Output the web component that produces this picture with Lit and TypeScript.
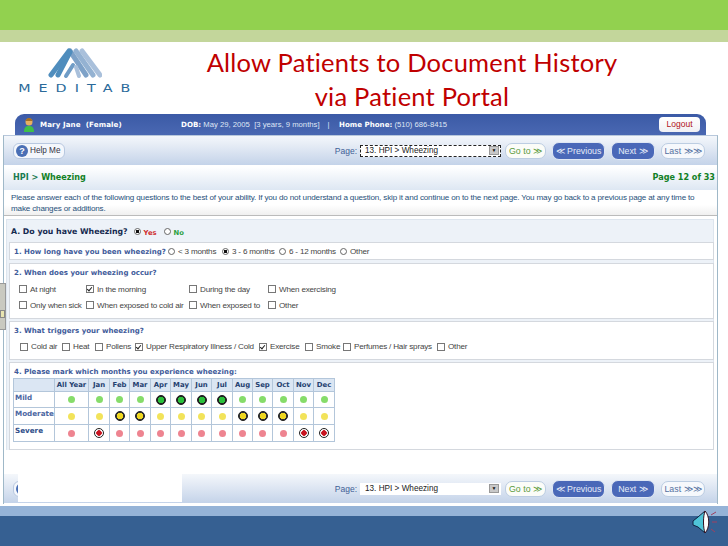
import { LitElement, html, css } from "lit";
import { customElement } from "lit/decorators.js";

const months = ["Jan","Feb","Mar","Apr","May","Jun","Jul","Aug","Sep","Oct","Nov","Dec"];
const colWidths = [41,34,21,20,21,20,21,20,21,20,20,21,20,21];
const chosen: Record<string, number[]> = {
  Mild: [3,4,5,6],
  Moderate: [1,2,7,8,9],
  Severe: [0,10,11],
};
const tone: Record<string,string> = { Mild: "g", Moderate: "y", Severe: "r" };
const q2 = [
  ["At night",false],["In the morning",true],["During the day",false],["When exercising",false],
  ["Only when sick",false],["When exposed to cold air",false],["When exposed to",false],["Other",false],
] as [string,boolean][];
const q3 = [
  ["Cold air",false,42],["Heat",false,33],["Pollens",false,40],["Upper Respiratory Illness / Cold",true,124],
  ["Exercise",true,46],["Smoke",false,38],["Perfumes / Hair sprays",false,94],["Other",false,40],
] as [string,boolean,number][];
const q1 = [["< 3 months",false,54],["3 - 6 months",true,57],["6 - 12 months",false,61],["Other",false,40]] as [string,boolean,number][];

@customElement("app-root")
export class AppRoot extends LitElement {
  static styles = css`
    :host { display: block; width: 728px; height: 546px; overflow: hidden; font-family: "Liberation Sans", Arial, sans-serif; background: #fff; }
    .page { position: relative; width: 728px; height: 546px; display: flex; flex-direction: column; background: #fff; overflow: hidden; }
    .green { height: 30px; background: #92d14f; flex: none; }
    .lime { height: 12px; background: #c3d69b; flex: none; }
    .head { height: 72px; flex: none; display: flex; }
    .logo { width: 114px; margin-left: 18px; display: flex; flex-direction: column; align-items: center; padding-top: 6px; box-sizing: border-box; height: 72px; }
    .logo svg { display: block; }
    .wordmark { font: 400 11px/11px "DejaVu Sans", sans-serif; color: #2a6a9a; letter-spacing: 6.2px; margin-top: 4px; white-space: nowrap; margin-right: -6.2px; transform: scaleX(1.3); }
    .title { margin-left: 50px; width: 460px; text-align: center; color: #c00000; font: 400 25.5px/34px Lato, sans-serif; letter-spacing: .22px; padding-top: 3px; box-sizing: border-box; white-space: nowrap; }
    .patient { flex: none; margin-left: 15px; width: 691px; height: 21px; box-sizing: border-box; background: linear-gradient(#3b5aa6, #4a68b2); border-radius: 9px 9px 0 0; display: flex; align-items: center; color: #dfe6f5; font-size: 7.7px; padding-left: 8px; white-space: nowrap; }
    .patient b { color: #fff; font-family: "DejaVu Sans", sans-serif; font-size: 7.1px; }
    .name { margin-left: 5px; width: 141px; letter-spacing: .1px; }
    .dob { width: 137px; }
    .sep { width: 21px; text-align: center; }
    .phone { flex: 1; }
    .logout { width: 41px; height: 15px; margin-right: 6px; background: linear-gradient(#fff, #f0f0f4); border-radius: 4px; color: #b01020; font-size: 8.5px; line-height: 15px; text-align: center; }
    .win { flex: none; margin-left: 3px; width: 715px; height: 369px; box-sizing: border-box; border: 1px solid #9fb8c8; border-bottom: 0; border-top-color: #b8c8dc; display: flex; flex-direction: column; }
    .bar { flex: none; height: 29px; display: flex; align-items: center; background: linear-gradient(#f4f7fb 0%, #dfe7f3 45%, #c4d3e9 100%); font-size: 8.5px; color: #444; padding-left: 9px; padding-right: 12px; }
    .help { width: 52px; height: 16px; box-sizing: border-box; border: 1px solid #b8c8e0; border-radius: 6px; background: #f4f7fc; display: flex; align-items: center; gap: 2px; padding-left: 2px; color: #334; font-size: 8.2px; white-space: nowrap; }
    .q { width: 12px; height: 12px; border-radius: 50%; background: #4a6fb5; color: #fff; font: 700 9px/12px "Liberation Sans", sans-serif; text-align: center; flex: none; }
    .pg { margin-left: auto; color: #3f5f96; font-size: 8.5px; margin-right: 3px; }
    .sel { width: 141px; height: 12px; box-sizing: border-box; border: 1px dashed #222; background: #fff; display: flex; align-items: center; justify-content: space-between; padding-left: 4px; font-size: 8.2px; color: #222; white-space: nowrap; margin-right: 4px; }
    .sel.plain { border-color: #fff; }
    .arrow { width: 10px; height: 9px; background: #c8c8c8; border: 1px solid #999; box-sizing: border-box; color: #111; font-size: 5px; line-height: 7px; text-align: center; margin-right: 1px; }
    .btn { height: 18px; box-sizing: border-box; border-radius: 7px; display: flex; align-items: center; justify-content: center; font-size: 8.8px; white-space: nowrap; margin-left: 6px; }
    .go { width: 41px; margin-left: 0; background: #fbfcf8; border: 1px solid #bccde2; color: #5a9a3c; height: 16px; }
    .prev { width: 53px; background: #4a68b8; border: 1px solid #dfe7f4; color: #e6ecf8; }
    .next { width: 44px; background: #4a68b8; border: 1px solid #dfe7f4; color: #e6ecf8; }
    .last { width: 44px; background: #f6f8fc; border: 1px solid #bccde2; color: #5470a0; height: 16px; }
    .crumb { flex: none; margin-top: 2px; height: 23px; box-sizing: border-box; padding: 0 2px 3px 9px; display: flex; align-items: center; justify-content: space-between; background: linear-gradient(#fff, #dde7f3); font: 700 8.1px "DejaVu Sans", sans-serif; color: #118025; }
    .crumb i { font-style: normal; color: #1a7a50; }
    .intro { flex: none; height: 26px; box-sizing: border-box; padding: 2px 0 0 7px; font-size: 8.1px; letter-spacing: -.17px; line-height: 11px; color: #27507a; background: linear-gradient(#fff 60%, #f0f0f0); border-bottom: 1px solid #bbb; white-space: nowrap; }
    .panel { flex: none; margin: 3px 3px 0 2px; background: #edf2f8; border: 1px solid #dde5ee; border-bottom: 0; height: 231px; box-sizing: border-box; padding: 0 0 0 2px; }
    .a { height: 22px; display: flex; align-items: center; padding-left: 2px; font: 700 7.8px "DejaVu Sans", sans-serif; color: #14294f; white-space: nowrap; }
    .a .rd.first { margin-left: 6px; }
    .a .yes { color: #d03030; font-size: 6.8px; margin: 3px 7px 0 3px; }
    .a .no { color: #2aa040; font-size: 6.8px; margin: 3px 0 0 3px; }
    .box { background: #fff; border: 1px solid #d4d8de; box-sizing: border-box; margin-bottom: 2px; padding-left: 4px; width: 705px; }
    .lbl { font: 700 7.05px "DejaVu Sans", sans-serif; color: #3f5b9a; white-space: nowrap; }
    .b1 { height: 18px; display: flex; align-items: center; margin-bottom: 3px; }
    .b2 { height: 56px; padding-top: 4px; }
    .b3 { height: 39px; padding-top: 4px; }
    .b4 { height: 88px; padding-top: 4px; margin-bottom: 0; }
    .g2 { display: grid; grid-template-columns: 67px 103px 79px 90px; grid-auto-rows: 16px; margin: 4px 0 0 5px; }
    .row { display: flex; margin: 7px 0 0 6px; }
    .opt { display: flex; align-items: center; gap: 3px; font-size: 8.1px; letter-spacing: -.2px; color: #444; white-space: nowrap; flex: none; }
    .ck { width: 8px; height: 8px; box-sizing: border-box; border: 1px solid #777; background: #fff; position: relative; flex: none; }
    .ck.on::after { content: ""; position: absolute; left: 1px; top: 0; width: 2px; height: 4px; border: solid #222; border-width: 0 1.5px 1.5px 0; transform: rotate(40deg); }
    .rd { width: 7px; height: 7px; box-sizing: border-box; border: 1px solid #666; border-radius: 50%; background: #fff; display: inline-block; flex: none; }
    .rd.on { background: radial-gradient(circle, #111 0 1.5px, #fff 2px); }
    table { border-collapse: collapse; table-layout: fixed; width: 321px; margin-top: 2px; margin-left: -1px; font: 700 6.9px "DejaVu Sans", sans-serif; color: #24406f; }
    th, td { border: 1px solid #b3c6da; padding: 0; text-align: center; }
    thead th { height: 12px; background: #dbe6f3; font-weight: 700; }
    tbody th { text-align: left; color: #4c67a2; font-weight: 700; font-size: 7.2px; padding-left: 1px; white-space: nowrap; vertical-align: top; line-height: 12px; }
    tbody tr:last-child th { color: #314f8a; }
    tr.r1 td, tr.r1 th { height: 15px; }
    tr.r2 td, tr.r2 th { height: 16px; }
    tr.r3 td, tr.r3 th { height: 16px; }
    .dot { display: inline-block; width: 7px; height: 7px; border-radius: 50%; vertical-align: middle; }
    .dot.g { background: #86dc6a; } .dot.y { background: #f2e35a; } .dot.r { background: #ee8490; }
    .big { display: inline-block; width: 10px; height: 10px; border-radius: 50%; border: 1px solid #222; box-sizing: border-box; vertical-align: middle; }
    .big.g { background: radial-gradient(circle, #2bc03c 0 3px, #222 3.5px); }
    .big.y { background: radial-gradient(circle, #f0d820 0 3px, #333 3.5px); }
    .big.r { background: radial-gradient(circle, #c81420 0 2.5px, #fff 3px); }
    .foot { margin-top: auto; margin-bottom: 1px; }
    .band { position: absolute; left: 0; right: 0; top: 506px; height: 10px; background: #95b3d7; }
    .navy { position: absolute; left: 0; right: 0; top: 516px; height: 30px; background: #366092; }
    .notch { position: absolute; left: 718px; top: 500px; width: 10px; height: 6px; background: #fff; }
    .patch { position: absolute; left: 18px; top: 473px; width: 164px; height: 29px; background: #fff; }
    .tab { position: absolute; left: 0; top: 283px; width: 6px; height: 47px; box-sizing: border-box; background: #c9c9c0; border: 1px solid #999; border-left: 0; }
    .tab::after { content: ""; position: absolute; left: 0; top: 26px; width: 3px; height: 6px; background: #e8e4b0; border: 1px solid #888; }
    .speaker { position: absolute; left: 692px; top: 509px; }
    .avatar { flex: none; display: block; }
  `;

  private check(label: string, on: boolean) {
    return html`<span class="opt"><span class="ck ${on ? "on" : ""}"></span>${label}</span>`;
  }

  private toolbar(top: boolean) {
    return html`<div class="bar ${top ? "" : "foot"}">
      <span class="help"><span class="q">?</span>Help Me</span>
      <span class="pg">Page:</span>
      <span class="sel ${top ? "" : "plain"}">13. HPI &gt; Wheezing<span class="arrow">▼</span></span>
      <span class="btn go">Go to ≫</span>
      <span class="btn prev">≪ Previous</span>
      <span class="btn next">Next ≫</span>
      <span class="btn last">Last ≫≫</span>
    </div>`;
  }

  render() {
    return html`<div class="page">
      <div class="green"></div>
      <div class="lime"></div>
      <div class="head">
        <div class="logo">
          <svg width="54" height="31" viewBox="0 0 54 31" fill="none" stroke-linecap="round">
            <path d="M34 3 L52 27" stroke="#a9c0db" stroke-width="5"/>
            <path d="M28 3 L45 27" stroke="#94b2d2" stroke-width="5"/>
            <path d="M22 3 L38 27" stroke="#7ea2c8" stroke-width="5"/>
            <path d="M21 3 L3 27" stroke="#4f8dbd" stroke-width="5"/>
            <path d="M22 4 L10 27" stroke="#4f8dbd" stroke-width="5"/>
            <path d="M25 17 L18 28" stroke="#6f9cc6" stroke-width="4"/>
            <path d="M28 19 L31 28" stroke="#a9c0db" stroke-width="4"/>
          </svg>
          <div class="wordmark">MEDITAB</div>
        </div>
        <div class="title">Allow Patients to Document History<br>via Patient Portal</div>
      </div>
      <div class="patient">
        <svg class="avatar" width="12" height="15" viewBox="0 0 12 15">
          <path d="M1 15 C1 10 3 9 6 9 C9 9 11 10 11 15 Z" fill="#3fc04a"/>
          <circle cx="6" cy="5" r="3.5" fill="#e8b060"/>
          <path d="M2.5 4 C3 0 9 0 9.5 4 Z" fill="#a87020"/>
        </svg>
        <b class="name">Mary Jane&nbsp; (Female)</b>
        <span class="dob"><b>DOB:</b> May 29, 2005&nbsp; [3 years, 9 months]</span>
        <span class="sep">|</span>
        <span class="phone"><b>Home Phone:</b> (510) 686-8415</span>
        <span class="logout">Logout</span>
      </div>
      <div class="win">
        ${this.toolbar(true)}
        <div class="crumb"><span><i>HPI &gt;</i> Wheezing</span><span>Page 12 of 33</span></div>
        <div class="intro">Please answer each of the following questions to the best of your ability. If you do not understand a question, skip it and continue on to the next page. You may go back to a previous page at any time to<br>make changes or additions.</div>
        <div class="panel">
          <div class="a">A. Do you have Wheezing?<span class="rd on first"></span><span class="yes">Yes</span><span class="rd"></span><span class="no">No</span></div>
          <div class="box b1">
            <span class="lbl" style="width:154px">1. How long have you been wheezing?</span>
            ${q1.map(([t, on, w]) => html`<span class="opt" style="width:${w}px"><span class="rd ${on ? "on" : ""}"></span>${t}</span>`)}
          </div>
          <div class="box b2">
            <div class="lbl">2. When does your wheezing occur?</div>
            <div class="g2">${q2.map(([t, on]) => this.check(t, on))}</div>
          </div>
          <div class="box b3">
            <div class="lbl">3. What triggers your wheezing?</div>
            <div class="row">${q3.map(([t, on, w]) => html`<span style="width:${w}px;flex:none">${this.check(t, on)}</span>`)}</div>
          </div>
          <div class="box b4">
            <div class="lbl">4. Please mark which months you experience wheezing:</div>
            <table>
              <colgroup>${colWidths.map((w) => html`<col style="width:${w}px">`)}</colgroup>
              <thead><tr><th></th><th>All Year</th>${months.map((m) => html`<th>${m}</th>`)}</tr></thead>
              <tbody>
                ${Object.keys(chosen).map((k, i) => html`<tr class="r${i + 1}">
                  <th>${k}</th>
                  <td><span class="dot ${tone[k]}"></span></td>
                  ${months.map((_, m) => chosen[k].includes(m)
                    ? html`<td><span class="big ${tone[k]}"></span></td>`
                    : html`<td><span class="dot ${tone[k]}"></span></td>`)}
                </tr>`)}
              </tbody>
            </table>
          </div>
        </div>
        ${this.toolbar(false)}
      </div>
      <div class="band"></div>
      <div class="navy"></div>
      <div class="notch"></div>
      <div class="patch"></div>
      <div class="tab"></div>
      <svg class="speaker" width="26" height="27" viewBox="0 0 26 27" fill="none">
        <path d="M1 12 L6 8 L13 2 L13 24 L6 18 L1 16 Z" fill="#4fc4d8" stroke="#102040" stroke-width="1"/>
        <path d="M13 2 C18 7 18 19 13 24 C11 19 11 7 13 2 Z" fill="#fff" stroke="#301020" stroke-width="1"/>
        <path d="M19 6 L24 3 M20 13 L25 13 M19 20 L23 23" stroke="#a04060" stroke-width="1"/>
      </svg>
    </div>`;
  }
}
